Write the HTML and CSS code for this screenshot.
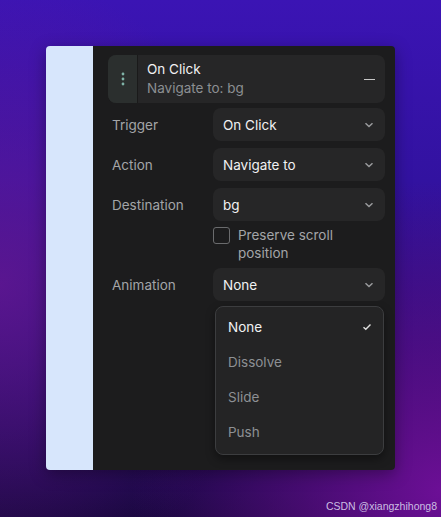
FILE: index.html
```html
<!DOCTYPE html>
<html>
<head>
  <title>Interaction</title>
  <link rel="stylesheet" href="styles.css">
</head>
<body>
  <div class="window">
    <div class="sidebar"></div>
    <div class="panel">
      <div class="interaction">
        <div class="handle">
          <svg width="4" height="14" viewBox="0 0 4 14"><circle cx="2" cy="2" r="1.4"/><circle cx="2" cy="7" r="1.4"/><circle cx="2" cy="12" r="1.4"/></svg>
        </div>
        <div class="summary">
          <div class="title">On Click</div>
          <div class="sub">Navigate to: bg</div>
        </div>
        <span class="collapse"></span>
      </div>

      <div class="row">
        <span class="label">Trigger</span>
        <div class="select">On Click<svg class="chev" viewBox="0 0 10 6"><path d="M1.5 1.2 5 4.5 8.5 1.2"/></svg></div>
      </div>
      <div class="row">
        <span class="label">Action</span>
        <div class="select">Navigate to<svg class="chev" viewBox="0 0 10 6"><path d="M1.5 1.2 5 4.5 8.5 1.2"/></svg></div>
      </div>
      <div class="row">
        <span class="label">Destination</span>
        <div class="select">bg<svg class="chev" viewBox="0 0 10 6"><path d="M1.5 1.2 5 4.5 8.5 1.2"/></svg></div>
      </div>
      <div class="check-row">
        <span class="box"></span>
        <span class="check-text">Preserve scroll position</span>
      </div>
      <div class="row anim">
        <span class="label">Animation</span>
        <div class="select">None<svg class="chev" viewBox="0 0 10 6"><path d="M1.5 1.2 5 4.5 8.5 1.2"/></svg></div>
      </div>
      <div class="menu-row">
        <ul class="menu">
          <li class="active">None<svg class="tick" viewBox="0 0 10 8"><path d="M1.5 4.2 3.8 6.3 8.5 1.5"/></svg></li>
          <li>Dissolve</li>
          <li>Slide</li>
          <li>Push</li>
        </ul>
      </div>
    </div>
  </div>
  <div class="mark">CSDN @xiangzhihong8</div>
</body>
</html>
```

FILE: styles.css
```css
html, body {
  margin: 0;
  height: 100%;
}

body {
  font-family: 'Inter', 'Noto Sans', sans-serif;
  font-size: 13.5px;
  color: #e9e9ea;
  background:
    radial-gradient(ellipse 70% 60% at 100% 95%, #6c0f96 0%, rgba(108,15,150,0) 100%),
    radial-gradient(ellipse 60% 60% at 0% 55%, rgba(110,25,150,0.7) 0%, rgba(110,25,150,0) 100%),
    linear-gradient(180deg, #3b14b4 0%, #3212a0 35%, #230c6a 70%, #16073c 100%);
  position: relative;
  overflow: hidden;
}

.window {
  position: absolute;
  left: 46px;
  top: 46px;
  width: 349px;
  height: 424px;
  display: flex;
  border-radius: 4px;
  overflow: hidden;
  box-shadow: 0 4px 16px rgba(0,0,0,0.35);
}

.sidebar {
  width: 47px;
  background: #d7e6fc;
}

.panel {
  flex: 1;
  background: #1c1c1d;
  padding: 9px 10px 0 15px;
}

.interaction {
  display: flex;
  align-items: stretch;
  height: 48px;
  background: #262627;
  border-radius: 8px;
  overflow: hidden;
}

.handle {
  width: 29px;
  background: #2b2f2e;
  border-right: 1px solid #1a1a1a;
  display: flex;
  align-items: center;
  justify-content: center;
}

.handle svg { fill: #7fb3a7; }

.summary {
  flex: 1;
  padding: 6px 0 0 9px;
}

.title {
  color: #f1f1f2;
  line-height: 17px;
}

.sub {
  color: #8c8f92;
  line-height: 21px;
}

.collapse {
  width: 11px;
  height: 1px;
  background: #c8c8c8;
  align-self: center;
  margin-right: 10px;
}

.row {
  display: flex;
  align-items: center;
  margin-top: 7px;
  height: 33px;
}

.interaction + .row { margin-top: 5px; }

.label {
  width: 101px;
  padding-left: 4px;
  color: #a3a5a8;
}

.select {
  flex: 1;
  height: 33px;
  display: flex;
  align-items: center;
  justify-content: space-between;
  background: #262627;
  border-radius: 8px;
  padding: 0 11px 0 10px;
  color: #f1f1f2;
}

.chev {
  width: 10px;
  height: 6px;
  fill: none;
  stroke: #9a9b9d;
  stroke-width: 1.5;
}

.check-row {
  display: flex;
  align-items: flex-start;
  margin: 6px 0 0 105px;
}

.box {
  width: 15px;
  height: 15px;
  border: 1.5px solid #6a6b6d;
  border-radius: 3px;
  margin-right: 8px;
  flex-shrink: 0;
}

.check-text {
  width: 115px;
  color: #a3a5a8;
  line-height: 18px;
  margin-top: -1px;
}

.row.anim { margin-top: 6px; }

.menu-row {
  padding: 5px 1px 0 107px;
}

.menu {
  list-style: none;
  margin: 0;
  padding: 2px 0 5px;
  background: #242425;
  border: 1px solid #3c3d3f;
  border-radius: 8px;
  box-shadow: 0 4px 10px rgba(0,0,0,0.4);
}

.menu li {
  height: 35px;
  display: flex;
  align-items: center;
  justify-content: space-between;
  padding: 0 11px 0 12px;
  color: #8d9094;
}

.menu li.active { color: #f1f1f2; }

.tick {
  width: 10px;
  height: 8px;
  fill: none;
  stroke: #e0e0e0;
  stroke-width: 1.4;
}

.mark {
  position: absolute;
  right: 4px;
  bottom: 5px;
  font-family: 'Liberation Sans', sans-serif;
  font-size: 10.5px;
  color: #cbbde2;
}
```
